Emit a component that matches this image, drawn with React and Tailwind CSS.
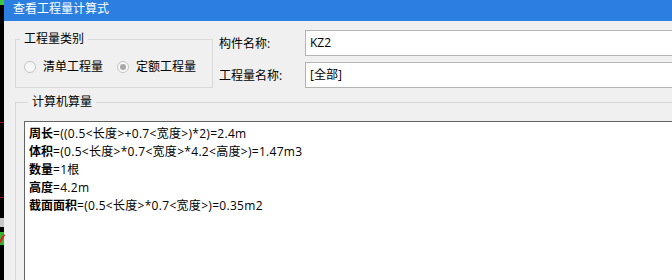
import React from 'react';

const font = { fontFamily: '"Open Sans", "Noto Sans CJK SC", sans-serif' };

const lines = [
  { label: '周长', rest: '=((0.5<长度>+0.7<宽度>)*2)=2.4m' },
  { label: '体积', rest: '=(0.5<长度>*0.7<宽度>*4.2<高度>)=1.47m3' },
  { label: '数量', rest: '=1根' },
  { label: '高度', rest: '=4.2m' },
  { label: '截面面积', rest: '=(0.5<长度>*0.7<宽度>)=0.35m2' },
];

const Radio = ({ label, checked }) => (
  <label className="flex items-center gap-[7px]">
    <span className="w-[12px] h-[12px] rounded-full border border-[#c4c4c4] bg-[#f7f7f7] flex items-center justify-center">
      {checked && <span className="w-[6px] h-[6px] rounded-full bg-[#a8a8a8]" />}
    </span>
    <span>{label}</span>
  </label>
);

const Field = ({ label, value }) => (
  <div className="flex items-center">
    <span className="w-[86px] pt-[2px]">{label}</span>
    <div className="w-[420px] h-[26px] border border-[#b4b4b4] border-r-0 bg-white flex items-center pl-[4px]">
      {value}
    </div>
  </div>
);

export default function App() {
  return (
    <div className="w-[672px] h-[280px] flex overflow-hidden text-[12px] text-black" style={font}>
      {/* strip of the window behind */}
      <div className="w-[4px] h-full bg-black flex flex-col shrink-0">
        <div className="h-[5px] bg-[#3ec43e]" />
        <div className="h-[117px]" />
        <div className="h-[1px] bg-[#a01010]" />
        <div className="h-[74px]" />
        <div className="h-[1px] bg-[#a01010]" />
        <div className="h-[20px]" />
        <div className="h-[9px] bg-[#c8c8c8]" />
        <div className="h-[5px]" />
        <div className="h-[13px] bg-[#2fb82f] flex items-center justify-center">
          <div className="w-[2px] h-[9px] bg-[#e02020] rotate-[30deg]" />
        </div>
      </div>

      {/* dialog */}
      <div className="flex-1 flex flex-col bg-[#f0f0f0] min-w-0">
        <div className="h-[21px] bg-[#2b7fe0] text-white pl-[9px] flex items-center pb-[3px] shrink-0">
          查看工程量计算式
        </div>

        <div className="pl-[11px] pt-[9px] flex flex-col">
          <div className="flex items-start">
            <fieldset className="w-[198px] h-[57px] mt-[1px] border border-[#d9d9d9] shrink-0">
              <legend className="ml-[4px] px-[4px] leading-[16px]">工程量类别</legend>
              <div className="h-[40px] flex items-center gap-[14px] pl-[8px]">
                <Radio label="清单工程量" />
                <Radio label="定额工程量" checked />
              </div>
            </fieldset>

            <div className="ml-[6px] flex flex-col gap-[6px]">
              <Field label="构件名称:" value="KZ2" />
              <Field label="工程量名称:" value="[全部]" />
            </div>
          </div>

          <fieldset className="w-[700px] h-[200px] mt-[6px] border border-[#d9d9d9] border-r-0 pl-[8px]">
            <legend className="ml-[4px] px-[4px] leading-[16px]">计算机算量</legend>
            <div className="mt-[11px] h-[170px] bg-white border-t border-l border-[#646464] pl-[4px] pt-[3px]">
              {lines.map((l) => (
                <div key={l.label} className="leading-[18px] whitespace-pre">
                  <span className="font-bold">{l.label}</span>
                  <span className="tracking-[0.3px]">{l.rest}</span>
                </div>
              ))}
            </div>
          </fieldset>
        </div>
      </div>
    </div>
  );
}
